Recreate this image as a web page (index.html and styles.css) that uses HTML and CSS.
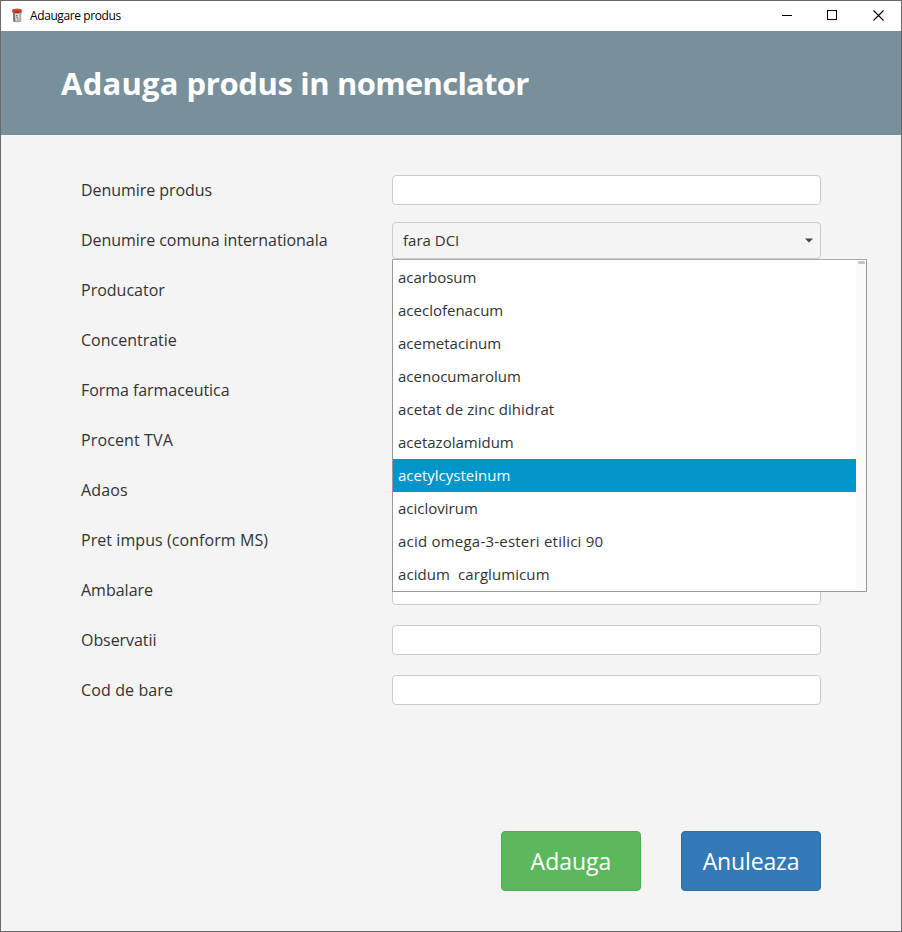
FILE: index.html
```html
<!DOCTYPE html>
<html lang="ro">
<head>
<meta charset="utf-8">
<title>Adaugare produs</title>
<link rel="stylesheet" href="styles.css">
</head>
<body>
<div class="window">
  <div class="titlebar">
    <svg class="app-icon" width="12" height="15" viewBox="0 0 12 15">
      <path d="M1.800 4h8.600l-.2 9.400Q6 15.200 2.200 13.600z" fill="#aaa9a5"/>
      <path d="M2.200 5h1.600l.4 9-1.900-.5z" fill="#74736f"/>
      <path d="M4 6.300 8.200 6l.2 6-3.800.6z" fill="#e2e1dd"/>
      <path d="M5 7.400l1.500.2M5 9.200h1.800M6 11h1.500" stroke="#555" stroke-width=".9"/>
      <path d="M1.300 2Q6-.5 10.700 2v2.200Q6 5.600 1.300 4.200z" fill="#a92f1c"/>
      <ellipse cx="6" cy="2" rx="4.400" ry="1.300" fill="#dc4630"/>
    </svg>
    <span class="caption">Adaugare produs</span>
    <div class="controls">
      <svg width="11" height="11" viewBox="0 0 11 11"><path d="M0 5.500h10" stroke="#000" shape-rendering="crispEdges"/></svg>
      <svg width="11" height="11" viewBox="0 0 11 11"><path d="M.5.5h9v9h-9z" fill="none" stroke="#000" shape-rendering="crispEdges"/></svg>
      <svg width="11" height="11" viewBox="0 0 11 11"><path d="M.5.5l10 10M10.500.5l-10 10" stroke="#000" stroke-width="1.100"/></svg>
    </div>
  </div>
  <header class="header"><h1><span class="verb">Adauga</span> produs in <span class="noun">nomenclator</span></h1></header>
  <main class="content">
    <div class="form">
      <div class="row"><label class="wide">Denumire produs</label><div class="field"></div></div>
      <div class="row"><label class="wide">Denumire comuna internationala</label>
        <div class="combo"><span>fara DCI</span><svg width="8" height="5" viewBox="0 0 8 5"><path d="M0 .5h8L4 4.500z" fill="#444"/></svg>
          <div class="popup">
            <ul class="options">
              <li>acarbosum</li>
              <li>aceclofenacum</li>
              <li>acemetacinum</li>
              <li>acenocumarolum</li>
              <li class="phrase">acetat de zinc dihidrat</li>
              <li>acetazolamidum</li>
              <li class="active">acetylcysteinum</li>
              <li>aciclovirum</li>
              <li class="long">acid omega-3-esteri etilici 90</li>
              <li class="phrase">acidum  carglumicum</li>
            </ul>
            <div class="scrollbar"><div class="thumb"></div></div>
          </div>
        </div>
      </div>
      <div class="row"><label>Producator</label><div class="field"></div></div>
      <div class="row"><label>Concentratie</label><div class="field"></div></div>
      <div class="row"><label class="wide">Forma farmaceutica</label><div class="field"></div></div>
      <div class="row"><label class="loose">Procent TVA</label><div class="field"></div></div>
      <div class="row"><label class="loose">Adaos</label><div class="field"></div></div>
      <div class="row"><label class="note">Pret impus (conform MS)</label><div class="field"></div></div>
      <div class="row"><label>Ambalare</label><div class="field"></div></div>
      <div class="row"><label class="wide">Observatii</label><div class="field"></div></div>
      <div class="row"><label class="loose">Cod de bare</label><div class="field"></div></div>
    </div>
    <div class="actions">
      <button class="btn add">Adauga</button>
      <button class="btn cancel">Anuleaza</button>
    </div>
  </main>
</div>
</body>
</html>
```
FILE: styles.css
```css
* { box-sizing: border-box; }
body { margin: 0; font-family: "Open Sans", "Noto Sans", sans-serif; color: #333; }
.window {
  width: 902px; height: 932px; border: 1px solid #6b696b;
  background: #f4f4f4; display: flex; flex-direction: column; overflow: hidden;
}
.titlebar {
  height: 30px; flex: none; background: #fff; display: flex; align-items: center;
  padding: 0 17px 1px 10px;
}
.app-icon { margin-right: 7px; }
.caption { font-size: 12px; line-height: 16px; padding-top: 1px; color: #000; letter-spacing: -0.4px; }
.controls { margin-left: auto; display: flex; gap: 35px; }
.controls svg { display: block; }
.controls svg:first-child { margin-right: -1px; }
.header { height: 104px; flex: none; background: #78909b; padding: 0 60px; display: flex; align-items: center; }
.header h1 { margin: 0; font-size: 31px; line-height: 42px; font-weight: 700; letter-spacing: -0.37px; color: #fff; }
.verb { letter-spacing: 0.25px; }
.noun { letter-spacing: -0.72px; }
.content { padding: 30px 80px 0; }
.row { display: grid; grid-template-columns: 311px 429px; height: 50px; align-items: center; }
.row label { font-size: 16px; line-height: 22px; }
.row .wide { letter-spacing: -0.06px; }
.row .loose { letter-spacing: 0.12px; }
.row .note { letter-spacing: 0.07px; }
.field { height: 30px; background: #fff; border: 1px solid #ccc; border-radius: 4px; }
.combo {
  position: relative; height: 37px; border: 1px solid #ccc; border-radius: 4px;
  background: #f4f4f4; display: flex; align-items: center; justify-content: space-between;
  padding: 0 7px 0 10px; font-size: 15px;
}
.popup {
  position: absolute; left: -1px; top: 36px; width: 475px; height: 333px; z-index: 2;
  background: #fff; border: 1px solid #999; border-top-color: #aaa; border-radius: 1px; display: flex;
}
.options { list-style: none; margin: 0; padding: 1px 0 0; flex: 1; }
.options li { height: 33px; line-height: 33px; padding-left: 5px; white-space: pre; }
.options .phrase { letter-spacing: 0.08px; }
.options .long { letter-spacing: 0.22px; }
.options .active { background: #0096c9; color: #fff; }
.scrollbar { width: 10px; background: #fafafa; padding: 1px 1px 0 2px; }
.thumb { height: 3px; border-radius: 2px; background: #c3c3c3; }
.actions { margin-top: 116px; display: flex; justify-content: flex-end; gap: 40px; }
.btn {
  width: 140px; height: 60px; padding: 0; border: 1px solid; border-radius: 4px;
  font-family: inherit; font-size: 23px; color: #fff;
}
.add { background: #5cb85c; border-color: #4cae4c; }
.cancel { background: #337ab7; border-color: #2e6da4; letter-spacing: -0.15px; }
```
